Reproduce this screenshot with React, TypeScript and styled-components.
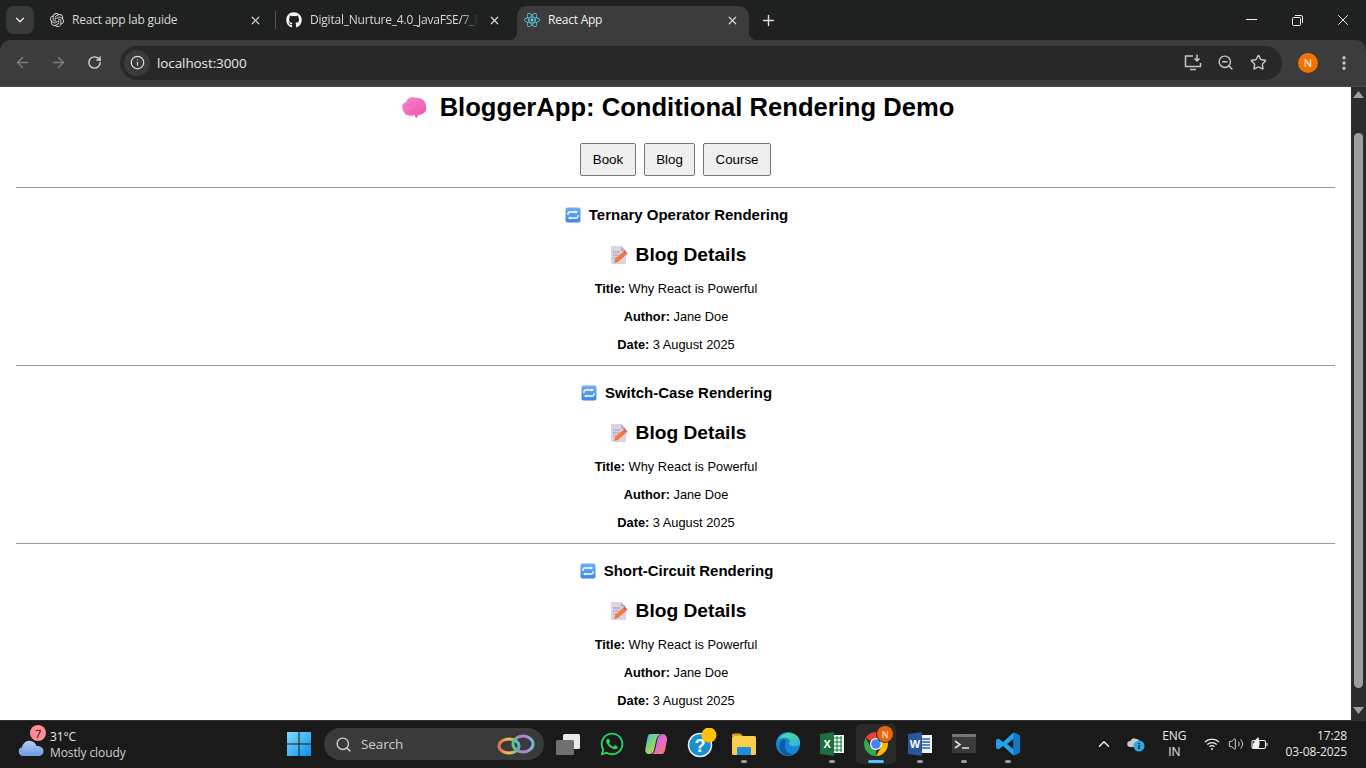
import React from "react";
import styled, { createGlobalStyle } from "styled-components";
import { ChevronDown, X, Plus, ArrowLeft, ArrowRight, RotateCw, Info, Search, ZoomOut, Star, EllipsisVertical, ChevronUp, Volume2 } from "lucide-react";
import { FaGithub, FaReact, FaWhatsapp } from "react-icons/fa";
import { SiOpenai } from "react-icons/si";

const Global = createGlobalStyle`
  html, body { margin: 0; padding: 0; height: 100%; overflow: hidden; background: #fff; }
  #root { height: 100%; }
  * { box-sizing: border-box; }
`;
const uiFont = `"Open Sans", "Noto Sans", sans-serif`;

const Shell = styled.div`display: flex; flex-direction: column; height: 768px; width: 1366px; overflow: hidden; background: #1f2020;`;
const TabStrip = styled.div`height: 40px; flex: none; background: #1f2020; display: flex; align-items: flex-start; padding-left: 6px; font-family: ${uiFont}; color: #dcdcdc; font-size: 12px; letter-spacing: -0.22px;`;
const TabMenu = styled.div`width: 28px; height: 28px; margin: 6px 6px 0 0; border-radius: 8px; background: #38393a; display: flex; align-items: center; justify-content: center; color: #e3e3e3;`;
const Tab = styled.div<{ $active?: boolean }>`
  width: 232px; height: 34px; margin-top: 6px; flex: none; display: flex; align-items: center; padding: 0 9px 6px;
  border-radius: 10px 10px 0 0; background: ${p => (p.$active ? "#3c3c3c" : "transparent")};
  color: ${p => (p.$active ? "#f0f0f0" : "#d8d8d8")}; position: relative;
  ${p => p.$active ? `
    &::before, &::after { content: ""; position: absolute; bottom: 0; width: 8px; height: 8px; }
    &::before { left: -8px; background: radial-gradient(circle at 0 0, transparent 8px, #3c3c3c 8.5px); }
    &::after { right: -8px; background: radial-gradient(circle at 100% 0, transparent 8px, #3c3c3c 8.5px); }
  ` : ""}
`;
const FirstTab = styled(Tab)`padding-left: 9px;`;
const SecondTab = styled(Tab)`margin-left: 2px; margin-right: 7px; padding-left: 8px; padding-right: 8px;`;
const ActiveTab = styled(Tab)`padding-left: 7px; padding-right: 9px;`;
const Favicon = styled.span`width: 16px; height: 16px; flex: none; display: flex; align-items: center; justify-content: center; margin-right: 7px;`;
const SecondFavicon = styled(Favicon)`margin-right: 8px;`;
const ActiveFavicon = styled(Favicon)`margin-right: 8px;`;
const TabTitle = styled.span<{ $fade?: boolean }>`flex: 1; min-width: 0; white-space: nowrap; overflow: hidden; padding-bottom: 1px;
  ${p => p.$fade ? "mask-image: linear-gradient(to right, #000 86%, transparent 96%);" : ""}`;
const TabClose = styled.span`width: 16px; height: 16px; display: flex; align-items: center; justify-content: center; color: #d8d8d8; flex: none;`;
const TabDivider = styled.span`width: 1px; height: 18px; background: #555; margin: 11px 0 0 3px; flex: none;`;
const NewTab = styled.div`width: 28px; height: 28px; margin: 6px 0 0 5px; display: flex; align-items: center; justify-content: center; color: #dcdcdc;`;
const WindowControls = styled.div`margin-left: auto; display: flex; height: 40px;`;
const WindowBtn = styled.div`width: 46px; height: 40px; display: flex; align-items: center; justify-content: center; color: #eee;`;

const Toolbar = styled.div`height: 47px; flex: none; background: #3c3c3c; border-radius: 10px 10px 0 0; display: flex; align-items: center; padding: 0 0 1px 4px; border-bottom: 1px solid #4a4a4a;`;
const NavBtn = styled.div<{ $dim?: boolean }>`width: 36px; height: 34px; display: flex; align-items: center; justify-content: center; color: ${p => (p.$dim ? "#7c7c7c" : "#d5d5d5")};`;
const UrlPill = styled.div`margin-left: 8px; width: 1162px; height: 34px; border-radius: 17px; background: #282828; display: flex; align-items: center; padding: 0 7px 0 4px; color: #e8e8e8; font-family: ${uiFont}; font-size: 13.5px; letter-spacing: -0.1px;`;
const InfoChip = styled.span`width: 26px; height: 26px; border-radius: 50%; background: #3a3a3a; display: flex; align-items: center; justify-content: center; color: #ddd; margin-right: 7px;`;
const UrlText = styled.span`flex: 1;`;
const PillIcon = styled.span`width: 33px; height: 28px; display: flex; align-items: center; justify-content: center; color: #c7c7c7;`;
const Avatar = styled.span`width: 20px; height: 20px; border-radius: 50%; background: #f57200; color: #fff; font-family: ${uiFont}; font-size: 11px; display: flex; align-items: center; justify-content: center; margin-left: 16px;`;
const MenuBtn = styled.span`width: 36px; margin-left: 8px; display: flex; justify-content: center; color: #c7c7c7;`;

const Main = styled.div`flex: 1; display: flex; min-height: 0;`;
const Page = styled.main`flex: 1; min-width: 0; background: #fff; padding: 5px 16px 0; font-family: "Liberation Sans", Arial, sans-serif; color: #000; text-align: center; overflow: hidden; font-size: 12.8px;`;
const Title = styled.h1`margin: 0 0 21px; font-size: 25.6px; line-height: 30px; font-weight: 700; display: flex; align-items: center; justify-content: center; padding-left: 4px;`;
const TitleEmoji = styled.span`width: 28px; height: 26px; margin-right: 11px; display: flex; align-items: center; justify-content: center;`;
const Buttons = styled.div`display: flex; justify-content: center; gap: 8px; margin-bottom: 11px;`;
const Btn = styled.button<{ $w: number }>`width: ${p => p.$w}px; height: 33px; padding: 0; background: #efefef; border: 1px solid #767676; border-radius: 2px; font: 13.333px "Liberation Sans", Arial, sans-serif; color: #000;`;
const Rule = styled.hr`margin: 0; border: 0; height: 1px; background: #9a9a9a;`;
const Section = styled.section`height: 177px; padding-top: 18px;`;
const Heading = styled.h2`margin: 0 0 19px; font-size: 14.976px; line-height: 18px; font-weight: 700; display: flex; justify-content: center; align-items: center; padding-left: 2px;`;
const HeadingEmoji = styled.span`width: 16px; height: 16px; margin-right: 8px; display: flex;`;
const SubHeading = styled.h3`margin: 0 0 15.4px; font-size: 19.2px; line-height: 23px; font-weight: 700; display: flex; justify-content: center; align-items: center; padding-left: 4px;`;
const SubEmoji = styled.span`width: 19px; height: 20px; margin-right: 8px; display: flex;`;
const Line = styled.p`margin: 0 0 11.7px; line-height: 16px; padding-left: 1px;`;

const Scrollbar = styled.div`width: 15px; flex: none; background: #2c2c2c; display: flex; flex-direction: column; align-items: center; position: relative;`;
const Arrow = styled.svg`display: block; flex: none;`;
const Thumb = styled.div`width: 9px; height: 555px; margin-top: 35px; background: #9e9e9e; border-radius: 5px;`;
const ArrowBottom = styled(Arrow)`margin-top: 19px;`;
const ArrowTop = styled(Arrow)`margin-top: 4px;`;

const Taskbar = styled.footer`height: 48px; flex: none; background: #1a1a1a; border-top: 1px solid #2e2e2e; padding-bottom: 1px; display: flex; align-items: center; font-family: ${uiFont}; color: #e8e8e8; font-size: 12px; letter-spacing: -0.1px;`;
const Weather = styled.div`width: 277px; padding-left: 18px; display: flex; align-items: center; flex: none;`;
const WeatherIcon = styled.div`width: 26px; height: 32px; position: relative; margin-right: 6px;`;
const WeatherBadge = styled.span`position: absolute; top: -3px; left: 12px; width: 16px; height: 16px; border-radius: 50%; background: #ff8c93; color: #111; font-size: 11px; display: flex; align-items: center; justify-content: center;`;
const WeatherText = styled.div`line-height: 16px; padding-top: 1px;`;
const WeatherSub = styled.div`color: #d0d0d0;`;
const TaskItem = styled.div<{ $dot?: boolean }>`
  width: 44px; height: 40px; flex: none; display: flex; align-items: center; justify-content: center; position: relative; border-radius: 5px;
  ${p => p.$dot ? `&::after { content: ""; position: absolute; bottom: 1px; left: 19px; width: 6px; height: 3px; border-radius: 2px; background: #9a9a9a; }` : ""}
`;
const ActiveItem = styled(TaskItem)`
  width: 40px; margin: 0 2px; background: #2a2a2a;
  &::after { content: ""; position: absolute; bottom: 1px; left: 12px; width: 16px; height: 3px; border-radius: 2px; background: #4cc2ff; }
`;
const SearchBox = styled.div`width: 220px; height: 32px; margin: 0 2px 0 3px; border-radius: 16px; background: #3a3a3a; display: flex; align-items: center; padding: 0 9px 0 11px; color: #cfcfcf; font-size: 13.5px; flex: none;`;
const SearchLabel = styled.span`flex: 1; margin-left: 9px;`;
const Tray = styled.div`margin-left: auto; display: flex; align-items: center; padding-right: 19px;`;
const TrayIcon = styled.span<{ $w: number }>`width: ${p => p.$w}px; display: flex; justify-content: center; align-items: center; color: #eee; flex: none;`;
const Lang = styled.div`width: 50px; text-align: center; line-height: 16px;`;
const Clock = styled.div`text-align: right; line-height: 16px; margin-left: 12px;`;
const ChromeBadge = styled.span`position: absolute; top: 2px; left: 21px; width: 16px; height: 16px; border-radius: 50%; background: #e8650a; color: #fff; font-size: 9px; display: flex; align-items: center; justify-content: center; box-shadow: 0 0 0 1px #2a2a2a;`;

const Brain = () => (
  <svg width="27" height="25" viewBox="0 0 27 25">
    <defs><linearGradient id="br" x1="0" y1="0" x2="1" y2="1"><stop offset="0" stopColor="#f58ad6" /><stop offset="1" stopColor="#f04fa8" /></linearGradient></defs>
    <path d="M3 17C0 13 1 8 5 7c1-4 6-6 10-4 5-1 10 3 10 8 1 4-1 7-4 8-2 1-3 1-4 1l-1 3-2-1v-2c-3 1-6 1-8 0-1 0-2-1-3-3z" fill="url(#br)" />
    <path d="M5 11c3-2 5-1 7 0M14 6c2 1 3 3 2 5M8 16c3 1 5-1 8-1M19 12c2 1 3 2 3 4" stroke="#e35bb0" strokeWidth="0.8" fill="none" />
  </svg>
);
const Repeat = () => (
  <svg width="16" height="16" viewBox="0 0 16 16">
    <defs><linearGradient id="rp" x1="0" y1="0" x2="0" y2="1"><stop offset="0" stopColor="#6cb0f7" /><stop offset="1" stopColor="#3f86ea" /></linearGradient></defs>
    <rect x="0.5" y="0.5" width="15" height="15" rx="2" fill="url(#rp)" />
    <path d="M3 8V6.500C3 5.500 3.700 5 4.500 5H12M13 8v1.500c0 1-.7 1.500-1.500 1.500H4" stroke="#fff" strokeWidth="1.300" fill="none" />
    <path d="M10.500 3.500 13 5l-2.500 1.500zM5.500 9.500 3 11l2.500 1.500z" fill="#fff" />
  </svg>
);
const Memo = () => (
  <svg width="19" height="20" viewBox="0 0 19 20">
    <path d="M2 1h10l5 5v13H2z" fill="#dcd3e4" />
    <path d="M12 1l5 5h-5z" fill="#b9aec6" />
    <path d="M4 7h7M4 10h6M4 13h4" stroke="#a79db3" strokeWidth="1.200" />
    <path d="M5 18l1-4 8-7 3 3-8 7z" fill="#f27a3a" />
    <path d="M14 7l1.500-1.500 3 3L17 10z" fill="#ef4f4f" />
  </svg>
);
const Windows = () => (
  <svg width="24" height="24" viewBox="0 0 24 24">
    <defs><linearGradient id="wn" x1="0" y1="0" x2="1" y2="1"><stop offset="0" stopColor="#7fdcfb" /><stop offset="1" stopColor="#0b8fe8" /></linearGradient></defs>
    <path d="M0 0h11.500v11.500H0zM12.500 0H24v11.500H12.500zM0 12.500h11.500V24H0zM12.500 12.500H24V24H12.500z" fill="url(#wn)" />
  </svg>
);
const CloudIcon = () => (
  <svg width="26" height="20" viewBox="0 0 26 20" style={{ position: "absolute", left: 0, top: 9 }}>
    <defs><linearGradient id="cl" x1="0" y1="0" x2="0" y2="1"><stop offset="0" stopColor="#b3cdf3" /><stop offset="1" stopColor="#6d98de" /></linearGradient></defs>
    <path d="M5 19a4.500 4.500 0 0 1-1-8.800C5 6 9 3 13 4c3 .5 5 3 5.500 5 4-.5 7 2 7 5s-2 5-5 5z" fill="url(#cl)" />
  </svg>
);
const Rings = () => (
  <svg width="38" height="24" viewBox="0 0 38 24">
    <defs>
      <linearGradient id="r1" x1="0" y1="0" x2="1" y2="0"><stop offset="0" stopColor="#e96a5b" /><stop offset=".5" stopColor="#f2c14e" /><stop offset="1" stopColor="#49b8d6" /></linearGradient>
      <linearGradient id="r2" x1="0" y1="0" x2="1" y2="0"><stop offset="0" stopColor="#5cc47e" /><stop offset=".5" stopColor="#c86fd6" /><stop offset="1" stopColor="#6fb8de" /></linearGradient>
    </defs>
    <ellipse cx="12" cy="14" rx="10" ry="7" fill="none" stroke="url(#r1)" strokeWidth="3" />
    <ellipse cx="26" cy="12" rx="10" ry="8" fill="none" stroke="url(#r2)" strokeWidth="3" />
  </svg>
);
const TaskView = () => (
  <svg width="24" height="22" viewBox="0 0 24 22">
    <rect x="7" y="1" width="17" height="15" rx="1.500" fill="#e8e8e8" />
    <rect x="0" y="7" width="18" height="15" rx="1.500" fill="#6f6f6f" />
  </svg>
);
const Copilot = () => (
  <svg width="24" height="24" viewBox="0 0 24 24">
    <defs>
      <linearGradient id="c1" x1="0" y1="0" x2="1" y2="1"><stop offset="0" stopColor="#36b6f0" /><stop offset=".5" stopColor="#8fd46a" /><stop offset="1" stopColor="#f4cf4a" /></linearGradient>
      <linearGradient id="c2" x1="0" y1="0" x2="1" y2="1"><stop offset="0" stopColor="#7d6cf0" /><stop offset=".5" stopColor="#e56bd0" /><stop offset="1" stopColor="#f6814e" /></linearGradient>
    </defs>
    <path d="M6 2h11c-3 1-4 3-5 7l-1.500 7c-.5 3-2 6-5 6-3 0-5-2-4-6l1.500-8C3.500 4 4.500 2 6 2z" fill="url(#c1)" />
    <path d="M18 22H8c2-1 3-3 3.500-6L13 9c.5-3 2-7 5.500-7 3 0 5 3 4.500 6l-1.500 8c-.5 3-1.500 6-3.500 6z" fill="url(#c2)" />
  </svg>
);
const Help = () => (
  <svg width="34" height="32" viewBox="0 0 34 32">
    <circle cx="17" cy="17" r="11.500" fill="#1b8fc9" stroke="#e8f4fa" strokeWidth="1.500" />
    <text x="17" y="23.500" textAnchor="middle" fontFamily="Liberation Sans" fontWeight="700" fontSize="18" fill="#fff">?</text>
    <circle cx="26" cy="7" r="7.500" fill="#ffc107" />
  </svg>
);
const Folder = () => (
  <svg width="24" height="22" viewBox="0 0 24 22">
    <path d="M0 2a1.500 1.500 0 0 1 1.500-1.500h7L11 3H0z" fill="#d9a520" />
    <rect x="0" y="3" width="24" height="19" rx="1.500" fill="#f7cf4b" />
    <rect x="5" y="14" width="14" height="8" rx="1" fill="#1b8fd8" />
  </svg>
);
const Edge = () => (
  <svg width="24" height="24" viewBox="0 0 24 24">
    <defs>
      <linearGradient id="e1" x1="0" y1="0" x2="1" y2="1"><stop offset="0" stopColor="#5be08f" /><stop offset="1" stopColor="#2bb0e0" /></linearGradient>
    </defs>
    <circle cx="12" cy="12" r="12" fill="#1487d4" />
    <path d="M2 8C5 1 14-1 20 3c4 3 4.500 7 4 10-3 2-9 2-11-1 0-2 1-2 1-4-3-3-9-3-12 0z" fill="url(#e1)" />
    <path d="M9 15c0 4 4 8 9 7-5 3-12 1-14-4-2-4 0-8 2-10 2-1 3 0 4 1-1 2-1 4-1 6z" fill="#0c5aa8" />
  </svg>
);
const Excel = () => (
  <svg width="24" height="24" viewBox="0 0 24 24">
    <rect x="11" y="3" width="13" height="18" fill="#e9f3ec" />
    <path d="M13 6h9M13 10h9M13 14h9M13 18h9M17 4v16M21 4v16" stroke="#21784a" strokeWidth="1" />
    <path d="M0 2l14-2v24L0 22z" fill="#1d6f42" />
    <text x="7" y="16" textAnchor="middle" fontFamily="Liberation Sans" fontWeight="700" fontSize="11" fill="#fff">X</text>
  </svg>
);
const Chrome = () => (
  <svg width="24" height="24" viewBox="4 4 40 40">
    <path d="M24 24 6.700 14A20 20 0 0 1 41.300 14H24z" fill="#ea4335" />
    <path d="M24 24 41.300 14A20 20 0 0 1 24 44l8.700-15z" fill="#fbbc04" />
    <path d="M24 24 24 44A20 20 0 0 1 6.700 14l8.600 15z" fill="#34a853" />
    <circle cx="24" cy="24" r="10" fill="#fff" />
    <circle cx="24" cy="24" r="8" fill="#4285f4" />
  </svg>
);
const Word = () => (
  <svg width="24" height="24" viewBox="0 0 24 24">
    <rect x="11" y="3" width="13" height="18" fill="#f0f3fa" />
    <path d="M14 7h8M14 10h8M14 13h8M14 16h8" stroke="#2b5fb0" strokeWidth="1.300" />
    <path d="M0 2l14-2v24L0 22z" fill="#2b579a" />
    <text x="7" y="16" textAnchor="middle" fontFamily="Liberation Sans" fontWeight="700" fontSize="11" fill="#fff">W</text>
  </svg>
);
const Terminal = () => (
  <svg width="24" height="20" viewBox="0 0 24 20">
    <rect width="24" height="18" y="1" rx="1" fill="#3a3a3a" />
    <rect width="24" height="3" y="0" rx="1" fill="#777" />
    <path d="M3 7l5 3.500L3 14" stroke="#ddd" strokeWidth="1.600" fill="none" />
    <path d="M10 14h7" stroke="#ddd" strokeWidth="1.600" />
  </svg>
);
const VSCode = () => (
  <svg width="24" height="24" viewBox="0 0 24 24">
    <path d="M17.500 0.500 24 3.500v17l-6.500 3L7 14l-4.500 3.500L0 16v-8l2.500-1.500L7 10zM17.500 7 11 12l6.500 5z" fill="#23a0e8" />
    <path d="M17.500 0.500 24 3.500v17l-6.500 3z" fill="#0f79c6" />
  </svg>
);
const MonitorDown = () => (
  <svg width="18" height="18" viewBox="0 0 18 18" fill="none" stroke="currentColor" strokeWidth="1.500">
    <path d="M9 2H1.500v10.500h15V9" />
    <path d="M6 15.500h6" />
    <path d="M13 0.500v6M10.500 4.500 13 7l2.500-2.500" />
  </svg>
);
const Restore = () => (
  <svg width="11" height="11" viewBox="0 0 11 11" fill="none" stroke="currentColor">
    <rect x="0.500" y="2.500" width="8" height="8" rx="1" />
    <path d="M3 .5h6a1.500 1.500 0 0 1 1.500 1.500v6" />
  </svg>
);
const Wifi = () => (
  <svg width="16" height="14" viewBox="0 0 16 14" fill="none" stroke="#eee" strokeWidth="1.200">
    <path d="M1 5a10 10 0 0 1 14 0M3.300 7.500a7 7 0 0 1 9.400 0" />
    <path d="M5.500 9.700a3.800 3.800 0 0 1 5 0" />
    <circle cx="8" cy="12" r="1" fill="#eee" stroke="none" />
  </svg>
);
const Battery = () => (
  <svg width="18" height="14" viewBox="0 0 18 14" fill="none" stroke="#eee" strokeWidth="1.100">
    <rect x="1" y="3.500" width="13.500" height="8" rx="1.500" />
    <path d="M16 6v3" />
    <path d="M2 11c0-5 3-8 5-10 1 3 2 6 0 10" fill="#eee" />
  </svg>
);
const OneDrive = () => (
  <svg width="18" height="16" viewBox="0 0 18 16">
    <path d="M3 11a3 3 0 0 1 .500-6C4.500 2.500 7 1.500 9 3c2-.500 3.500 1 4 3v5z" fill="#c9c9c9" />
    <circle cx="12" cy="10" r="5.500" fill="#2ea8e8" />
    <rect x="11.300" y="9" width="1.500" height="4" fill="#10222c" />
    <rect x="11.300" y="6.800" width="1.500" height="1.400" fill="#10222c" />
  </svg>
);

const Details = () => (
  <>
    <SubHeading><SubEmoji><Memo /></SubEmoji>Blog Details</SubHeading>
    <Line><strong>Title:</strong> Why React is Powerful</Line>
    <Line><strong>Author:</strong> Jane Doe</Line>
    <Line><strong>Date:</strong> 3 August 2025</Line>
  </>
);

const sections = ["Ternary Operator Rendering", "Switch-Case Rendering", "Short-Circuit Rendering"];

export default function App() {
  return (
    <Shell>
      <Global />
      <TabStrip>
        <TabMenu><ChevronDown size={14} strokeWidth={2.500} /></TabMenu>
        <FirstTab>
          <Favicon><SiOpenai size={14} /></Favicon><TabTitle>React app lab guide</TabTitle><TabClose><X size={13} strokeWidth={2.200} /></TabClose>
        </FirstTab>
        <TabDivider />
        <SecondTab>
          <SecondFavicon><FaGithub size={16} color="#f4f4f4" /></SecondFavicon><TabTitle $fade>Digital_Nurture_4.0_JavaFSE/7_R</TabTitle><TabClose><X size={13} strokeWidth={2.200} /></TabClose>
        </SecondTab>
        <ActiveTab $active>
          <ActiveFavicon><FaReact size={16} color="#61dafb" /></ActiveFavicon><TabTitle>React App</TabTitle><TabClose><X size={13} strokeWidth={2.200} /></TabClose>
        </ActiveTab>
        <NewTab><Plus size={17} /></NewTab>
        <WindowControls>
          <WindowBtn><svg width="11" height="2" viewBox="0 0 11 2"><rect width="11" height="1" fill="#eee" /></svg></WindowBtn>
          <WindowBtn><Restore /></WindowBtn>
          <WindowBtn><X size={18} strokeWidth={1.300} /></WindowBtn>
        </WindowControls>
      </TabStrip>
      <Toolbar>
        <NavBtn $dim><ArrowLeft size={17} /></NavBtn>
        <NavBtn $dim><ArrowRight size={17} /></NavBtn>
        <NavBtn><RotateCw size={15} strokeWidth={2.300} /></NavBtn>
        <UrlPill>
          <InfoChip><Info size={15} /></InfoChip>
          <UrlText>localhost:3000</UrlText>
          <PillIcon><MonitorDown /></PillIcon>
          <PillIcon><ZoomOut size={17} /></PillIcon>
          <PillIcon><Star size={17} /></PillIcon>
        </UrlPill>
        <Avatar>N</Avatar>
        <MenuBtn><EllipsisVertical size={18} strokeWidth={2.500} /></MenuBtn>
      </Toolbar>
      <Main>
        <Page>
          <Title><TitleEmoji><Brain /></TitleEmoji>BloggerApp: Conditional Rendering Demo</Title>
          <Buttons>
            <Btn $w={56}>Book</Btn>
            <Btn $w={51}>Blog</Btn>
            <Btn $w={68}>Course</Btn>
          </Buttons>
          {sections.map(name => (
            <React.Fragment key={name}>
              <Rule />
              <Section>
                <Heading><HeadingEmoji><Repeat /></HeadingEmoji>{name}</Heading>
                <Details />
              </Section>
            </React.Fragment>
          ))}
        </Page>
        <Scrollbar>
          <ArrowTop width="11" height="7" viewBox="0 0 11 7"><path d="M5.500 0 11 7H0z" fill="#9e9e9e" /></ArrowTop>
          <Thumb />
          <ArrowBottom width="11" height="7" viewBox="0 0 11 7"><path d="M0 0h11L5.500 7z" fill="#9e9e9e" /></ArrowBottom>
        </Scrollbar>
      </Main>
      <Taskbar>
        <Weather>
          <WeatherIcon><CloudIcon /><WeatherBadge>7</WeatherBadge></WeatherIcon>
          <WeatherText>31°C<WeatherSub>Mostly cloudy</WeatherSub></WeatherText>
        </Weather>
        <TaskItem><Windows /></TaskItem>
        <SearchBox><Search size={17} /><SearchLabel>Search</SearchLabel><Rings /></SearchBox>
        <TaskItem><TaskView /></TaskItem>
        <TaskItem><FaWhatsapp size={26} color="#25d366" /></TaskItem>
        <TaskItem><Copilot /></TaskItem>
        <TaskItem><Help /></TaskItem>
        <TaskItem $dot><Folder /></TaskItem>
        <TaskItem><Edge /></TaskItem>
        <TaskItem $dot><Excel /></TaskItem>
        <ActiveItem><Chrome /><ChromeBadge>N</ChromeBadge></ActiveItem>
        <TaskItem $dot><Word /></TaskItem>
        <TaskItem $dot><Terminal /></TaskItem>
        <TaskItem $dot><VSCode /></TaskItem>
        <Tray>
          <TrayIcon $w={38}><ChevronUp size={18} /></TrayIcon>
          <TrayIcon $w={26}><OneDrive /></TrayIcon>
          <Lang>ENG<br />IN</Lang>
          <TrayIcon $w={26}><Wifi /></TrayIcon>
          <TrayIcon $w={22}><Volume2 size={16} strokeWidth={1.300} /></TrayIcon>
          <TrayIcon $w={26}><Battery /></TrayIcon>
          <Clock>17:28<br />03-08-2025</Clock>
        </Tray>
      </Taskbar>
    </Shell>
  );
}
